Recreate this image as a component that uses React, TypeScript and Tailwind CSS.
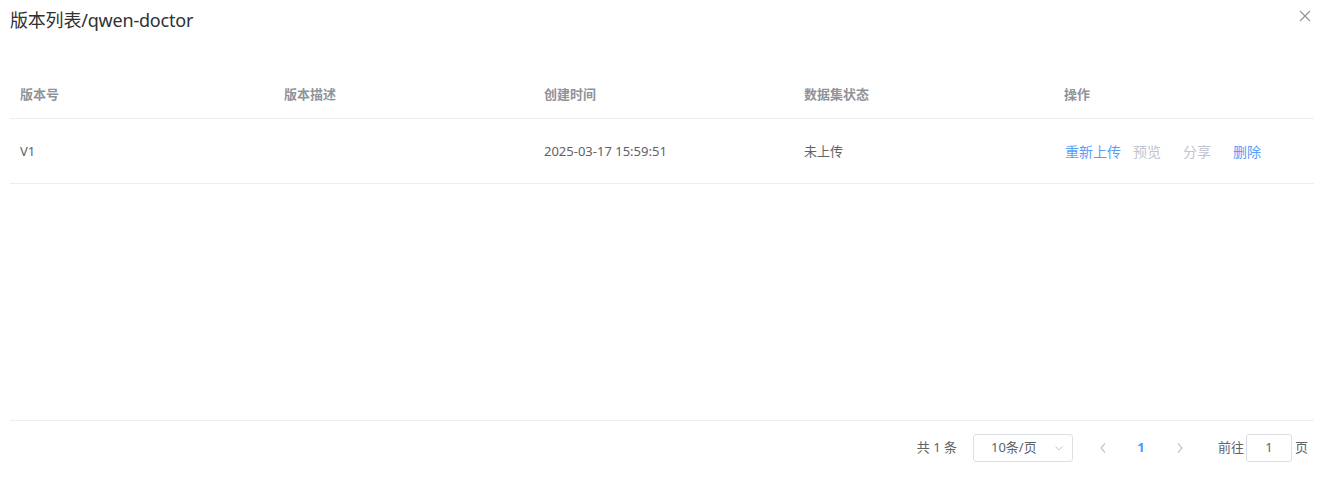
const font = { fontFamily: '"Noto Sans", "Noto Sans CJK SC", sans-serif' };

const cols = ["w-[264px]", "w-[260px]", "w-[260px]", "w-[260px]", "w-[260px]"];
const headers = ["版本号", "版本描述", "创建时间", "数据集状态", "操作"];

const App = () => {
  return (
    <div className="w-[1328px] h-[479px] bg-white relative text-[#606266]" style={font}>
      <div className="flex items-center h-[40px] pl-[10px]">
        <span className="text-[18px] text-[#303133] leading-6 tracking-[-0.2px]">版本列表/qwen-doctor</span>
      </div>
      <button className="absolute right-[17px] top-[10px] text-[#909399]">
        <svg width="12" height="12" viewBox="0 0 12 12" stroke="currentColor" strokeWidth="1.2">
          <path d="M1 1l10 10M11 1L1 11" />
        </svg>
      </button>

      <div className="ml-[10px] w-[1304px] mt-[30px] h-[351px] border-b border-[#ebeef5] flex flex-col">
        <div className="flex h-[49px] border-b border-[#ebeef5] items-center text-[13px] font-bold text-[#909399]">
          {headers.map((h, i) => (
            <div key={h} className={`${cols[i]} pl-[10px] pt-[2px]`}>{h}</div>
          ))}
        </div>
        <div className="flex h-[65px] border-b border-[#ebeef5] items-center text-[13px] text-[#606266] pt-[1px]">
          <div className={`${cols[0]} pl-[10px]`}>V1</div>
          <div className={`${cols[1]} pl-[10px]`}></div>
          <div className={`${cols[2]} pl-[10px]`}>2025-03-17 15:59:51</div>
          <div className={`${cols[3]} pl-[10px]`}>未上传</div>
          <div className={`${cols[4]} pl-[11px] flex items-center text-[14px]`}>
            <span className="text-[#5a9cf8] w-[68px]">重新上传</span>
            <span className="text-[#c0c4cc] w-[50px]">预览</span>
            <span className="text-[#c0c4cc] w-[50px]">分享</span>
            <span className="text-[#5a9cf8]">删除</span>
          </div>
        </div>
      </div>

      <div className="flex items-center justify-end pr-[20px] mt-[12px] h-[30px] text-[13px] text-[#606266]">
        <span className="mr-[16px]">共 1 条</span>
        <div className="w-[100px] h-[28px] border border-[#dcdfe6] rounded-[3px] flex items-center justify-between pl-[17px] pr-[8px]">
          <span>10条/页</span>
          <svg width="10" height="10" viewBox="0 0 10 10" fill="none" stroke="#c0c4cc" strokeWidth="1">
            <path d="M1.5 3.5L5 7l3.5-3.5" />
          </svg>
        </div>
        <div className="ml-[15px] flex items-center">
          <span className="w-[30px] flex justify-center text-[#c0c4cc]">
            <svg width="8" height="12" viewBox="0 0 8 12" fill="none" stroke="currentColor" strokeWidth="1.2">
              <path d="M6 1.5L2 6l4 4.5" />
            </svg>
          </span>
          <span className="w-[46px] text-center font-bold text-[#409eff]">1</span>
          <span className="w-[32px] flex justify-center text-[#c0c4cc]">
            <svg width="8" height="12" viewBox="0 0 8 12" fill="none" stroke="currentColor" strokeWidth="1.2">
              <path d="M2 1.5L6 6l-4 4.5" />
            </svg>
          </span>
        </div>
        <span className="ml-[22px]">前往</span>
        <div className="ml-[2px] w-[46px] h-[28px] border border-[#dcdfe6] rounded-[3px] flex items-center justify-center">1</div>
        <span className="ml-[3px]">页</span>
      </div>
    </div>
  );
};

export default App;
